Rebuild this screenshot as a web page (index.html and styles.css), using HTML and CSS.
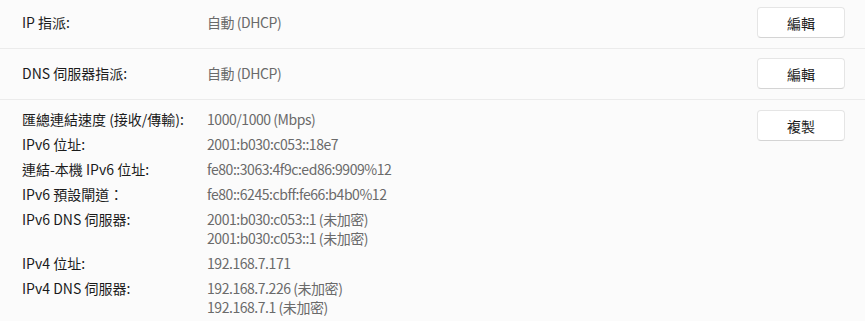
FILE: index.html
```html
<!DOCTYPE html>
<html lang="zh-Hant">
<head>
  <meta charset="UTF-8">
  <meta name="viewport" content="width=device-width, initial-scale=1.0">
  <title>網路內容</title>
  <link rel="stylesheet" href="styles.css">
</head>
<body>
  <div class="panel">
    <div class="row first">
      <span class="label">IP 指派:</span>
      <span class="value">自動 (DHCP)</span>
      <button class="btn">編輯</button>
    </div>

    <div class="row">
      <span class="label">DNS 伺服器指派:</span>
      <span class="value">自動 (DHCP)</span>
      <button class="btn">編輯</button>
    </div>

    <div class="row details">
      <div class="props">
        <span class="label">匯總連結速度 (接收/傳輸):</span>
        <span class="value">1000/1000 (Mbps)</span>

        <span class="label">IPv6 位址:</span>
        <span class="value">2001:b030:c053::18e7</span>

        <span class="label">連結-本機 IPv6 位址:</span>
        <span class="value">fe80::3063:4f9c:ed86:9909%12</span>

        <span class="label">IPv6 預設閘道：</span>
        <span class="value">fe80::6245:cbff:fe66:b4b0%12</span>

        <span class="label">IPv6 DNS 伺服器:</span>
        <div class="value">
          <span class="line">2001:b030:c053::1 (未加密)</span>
          <span class="line">2001:b030:c053::1 (未加密)</span>
        </div>

        <span class="label">IPv4 位址:</span>
        <span class="value">192.168.7.171</span>

        <span class="label">IPv4 DNS 伺服器:</span>
        <div class="value">
          <span class="line">192.168.7.226 (未加密)</span>
          <span class="line">192.168.7.1 (未加密)</span>
        </div>
      </div>
      <button class="btn">複製</button>
    </div>
  </div>
</body>
</html>
```

FILE: styles.css
```css
* {
  margin: 0;
  padding: 0;
  box-sizing: border-box;
}

body {
  background-color: #fbfbfb;
  font-family: "Noto Sans CJK TC", sans-serif;
  font-size: 14px;
  color: #1b1b1b;
}

.panel {
  width: 865px;
}

.row {
  display: flex;
  align-items: center;
  padding: 9px 20px 10px 22px;
  border-bottom: 1px solid #ebebeb;
}

.row.first {
  padding-top: 7px;
}

.label {
  width: 185px;
  flex-shrink: 0;
  line-height: 19px;
}

.value {
  flex: 1;
  color: #6a6a6a;
  line-height: 19px;
  letter-spacing: -0.45px;
}

.line {
  display: block;
  height: 19px;
}

.btn {
  width: 88px;
  height: 31px;
  font-family: inherit;
  font-size: 14px;
  color: #1b1b1b;
  background-color: #ffffff;
  border: 1px solid #e5e5e5;
  border-bottom-color: #d4d4d4;
  border-radius: 4px;
  cursor: pointer;
}

.details {
  align-items: flex-start;
  padding-top: 10px;
  border-bottom: none;
}

.props {
  flex: 1;
  display: grid;
  grid-template-columns: 185px 1fr;
  row-gap: 6px;
}

.props .label {
  width: auto;
}
```
